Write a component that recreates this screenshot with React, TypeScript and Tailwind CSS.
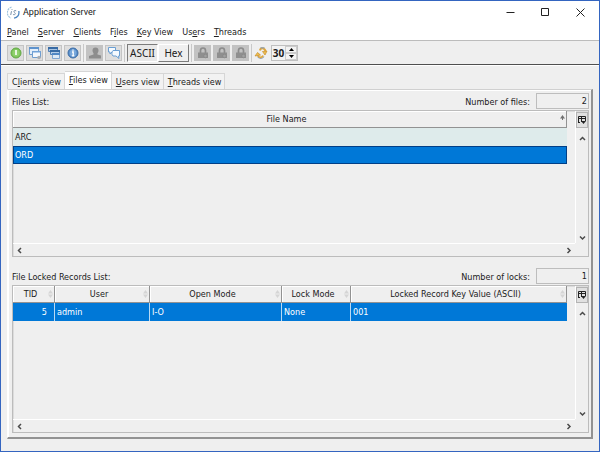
import { useState } from 'react';
import type { ReactNode } from 'react';
import { clsx } from 'clsx';

/** Label with one underlined access key. */
const Mnemonic = ({ text, at }: { text: string; at: number }) => (
  <span className="whitespace-pre">
    {text.slice(0, at)}
    <span className="underline underline-offset-1">{text[at]}</span>
    {text.slice(at + 1)}
  </span>
);

const menus = [
  { text: 'Panel', at: 0 },
  { text: 'Server', at: 0 },
  { text: 'Clients', at: 0 },
  { text: 'Files', at: 1 },
  { text: 'Key View', at: 0 },
  { text: 'Users', at: 2 },
  { text: 'Threads', at: 0 },
];

const tabs = [
  { text: 'Clients view', at: 1 },
  { text: 'Files view', at: 0 },
  { text: 'Users view', at: 0 },
  { text: 'Threads view', at: 0 },
];

const AppLogo = () => (
  <svg viewBox="0 0 13 13" className="size-[13px]" fill="none" aria-hidden="true">
    <path d="M4.500 1.200A5.700 5.700 0 0 0 4 12" stroke="#9fc3de" strokeWidth="1.200" strokeDasharray="2 .7" />
    <path d="M7 12.200C10.500 11.800 12.500 9 11.800 5" stroke="#4d86c0" strokeWidth="1.300" />
    <path d="M4.500 5.200 3.700 9M5 3.200v.8" stroke="#7c93ac" />
    <path d="M9.200 4.800C7.500 4 6.300 5 7.300 6.300 9 7.500 8.500 9.200 6 8.500" stroke="#7c93ac" />
  </svg>
);

const RoundIcon = ({ kind }: { kind: 'power' | 'info' }) => (
  <svg viewBox="0 0 14 14" className="size-[14px]" aria-hidden="true">
    <circle cx="7" cy="7" r="5" fill={kind === 'power' ? '#7cc45a' : '#5289c6'} stroke={kind === 'power' ? '#63a845' : '#3e6da6'} />
    <circle cx="7" cy="7" r="3.500" fill={kind === 'power' ? '#8fd06c' : '#79a8db'} />
    {kind === 'power' ? (
      <path d="M7 4v5" stroke="#fff" strokeWidth="1.600" />
    ) : (
      <path d="M7 3.500v1.300M6 6h1.200v3.500M5.800 9.800h2.600" stroke="#fff" strokeWidth="1.300" fill="none" />
    )}
  </svg>
);

const WindowsIcon = () => (
  <svg viewBox="0 0 14 14" className="size-[14px]" aria-hidden="true">
    <path d="M1.500 1.500h9v7h-9z" fill="#e3eefa" stroke="#6f9dcf" />
    <path d="M1 1h10v2H1z" fill="#5f93cd" />
    <path d="M4.500 5.500h8v6h-8z" fill="#f4f8fd" stroke="#6f9dcf" />
    <path d="M4 5h9v1.500H4z" fill="#72a3d8" />
    <circle cx="11" cy="11.500" r="1.800" fill="#a8adb3" />
  </svg>
);

const CascadeIcon = () => (
  <svg viewBox="0 0 14 14" className="size-[14px]" aria-hidden="true">
    <path d="M1.500 1.500h9v4h-9z" fill="#a9c5e3" stroke="#4f7fb5" />
    <path d="M1 1h10v2H1z" fill="#386ba5" />
    <path d="M3.500 4.500h9v4h-9z" fill="#b5cde8" stroke="#4f7fb5" />
    <path d="M3 4h10v2H3z" fill="#386ba5" />
    <path d="M5.500 7.500h7v5h-7z" fill="#dfeaf6" stroke="#7fa5d1" />
    <path d="M5 7h8v2H5z" fill="#5288c4" />
  </svg>
);

const UserIcon = () => (
  <svg viewBox="0 0 14 14" className="size-[14px]" fill="#8d8d8d" aria-hidden="true">
    <circle cx="7.500" cy="4.500" r="3" />
    <path d="M5.500 6h4v2.500l3.500 1v3H1V10l4.500-1.500z" />
  </svg>
);

const ChatIcon = () => (
  <svg viewBox="0 0 14 14" className="size-[14px]" fill="#f5faff" stroke="#6b9fd3" aria-hidden="true">
    <path d="M1.500 1.500h7v4.500H5L3 8V6H1.500z" />
    <path d="M6 4.500h6.500V10h-1l.500 2.500L9 10H6C4.500 8.500 4.500 6 6 4.500z" />
  </svg>
);

const LockIcon = () => (
  <svg viewBox="0 0 14 14" className="size-[14px]" aria-hidden="true">
    <path d="M4.500 7V4.500a2.500 2.500 0 0 1 5 0V7" fill="none" stroke="#8c8c8c" strokeWidth="1.700" />
    <path d="M2 6.500h10V12H2z" fill="#8f8f8f" />
    <circle cx="9.500" cy="10" r="1.800" fill="#a0a0a0" stroke="#858585" strokeWidth=".7" />
  </svg>
);

const RefreshIcon = () => (
  <svg viewBox="0 0 14 14" className="size-[14px]" fill="none" aria-hidden="true">
    <path d="M6 4.500C6.500 1.500 11 1.500 11.500 5.500" stroke="#e0a63a" strokeWidth="2" />
    <path d="M6.500 1.800h4M10 10.500c-1.500 2.500-5 2.500-6.500 0" stroke="#8b9eb4" strokeWidth="1.200" />
    <path d="M9 9.500C8 12 5 12 4 9.500" stroke="#e0a63a" strokeWidth="1.800" />
    <path d="M1 10 3.500 6.500 6.500 9zM8.500 5.500l4.500-.5-2 4z" fill="#efbf4e" stroke="#c78e2b" strokeWidth=".7" />
  </svg>
);

interface ToolButtonProps {
  label: string;
  disabled?: boolean;
  children: ReactNode;
}

const ToolButton = ({ label, disabled, children }: ToolButtonProps) => (
  <button
    type="button"
    aria-label={label}
    disabled={disabled}
    className="flex h-4 w-[17px] items-center justify-center border border-[#c4c4c4] bg-[#dedede] disabled:border-[#c2c2c2] disabled:bg-[#c2c2c2]"
  >
    {children}
  </button>
);

const Divider = () => <span className="h-[18px] w-px bg-[#c9c9c9]" />;

const Chevron = ({ d }: { d: string }) => (
  <svg viewBox="0 0 7 7" className="size-[7px]" fill="none" stroke="#4a4a4a" strokeWidth="1.500" aria-hidden="true">
    <path d={d} />
  </svg>
);

const SortMark = ({ sorted }: { sorted?: boolean }) => (
  <svg viewBox="0 0 5 8" className="h-2 w-[5px]" fill={sorted ? '#707070' : '#d5d5d5'} aria-hidden="true">
    <path d="M0 3.500 2.500 0 5 3.500z" />
    {sorted ? <path d="M2 3h1v2H2z" /> : <path d="M0 4.500 2.500 8 5 4.500z" />}
  </svg>
);

interface ListFrameProps {
  className: string;
  children: ReactNode;
}

/** Sunken list area with its column chooser and both scroll bars. */
const ListFrame = ({ className, children }: ListFrameProps) => (
  <div className={clsx('flex flex-col border border-[#bcbcbc] shadow-[inset_1px_1px_#dcdcdc]', className)}>
    <div className="flex flex-1 gap-2">
      <div className="min-w-0 flex-1">{children}</div>
      <div className="flex w-[13px] flex-col items-center border-l border-white pt-px">
        <button type="button" aria-label="Choose columns" className="flex h-4 w-3 items-center justify-center border border-[#b4b4b4] bg-[#e0e0e0]">
          <svg viewBox="0 0 8 8" className="size-2" fill="none" stroke="#222" aria-hidden="true">
            <path d="M.5 6V.5h7V5M.5 2.500h7M3.500 1v5M0 6.500h2" />
            <path d="M3 5h5L5.500 8z" fill="#222" stroke="none" />
          </svg>
        </button>
        <button type="button" aria-label="Scroll up" className="mt-1 flex size-3 items-center justify-center">
          <Chevron d="M1 5 3.500 2.500 6 5" />
        </button>
        <button type="button" aria-label="Scroll down" className="mt-auto flex size-3 items-center justify-center">
          <Chevron d="M1 2.500 3.500 5 6 2.500" />
        </button>
      </div>
    </div>
    <div className="mr-[13px] flex h-[13px] items-center justify-between border-t border-white pr-[3px] pl-[3px]">
      <button type="button" aria-label="Scroll left">
        <Chevron d="M5 1 2.500 3.500 5 6" />
      </button>
      <button type="button" aria-label="Scroll right">
        <Chevron d="M2.500 1 5 3.500 2.500 6" />
      </button>
    </div>
  </div>
);

const HeaderCell = ({ children, sorted }: { children: ReactNode; sorted?: boolean }) => (
  <th scope="col" className="h-[17px] border-r border-b border-[#929292] p-0 font-normal shadow-[inset_1px_1px_#ffffff]">
    <div className="flex items-center pr-px">
      <span className="flex-1 text-center whitespace-nowrap">{children}</span>
      <SortMark sorted={sorted} />
    </div>
  </th>
);

interface ListCaptionProps {
  title: string;
  countLabel: string;
  id: string;
  count: number;
}

const ListCaption = ({ title, countLabel, id, count }: ListCaptionProps) => (
  <div className="flex h-[17px] items-start">
    <h2 className="flex-1 pt-0.5">{title}</h2>
    <label htmlFor={id} className="pt-0.5 pr-1.5">
      {countLabel}
    </label>
    <input
      id={id}
      readOnly
      value={count}
      className="h-4 w-[53px] border border-[#bdbdbd] bg-[#efefef] pr-px text-right outline-none"
    />
  </div>
);

export default function App() {
  const [active, setActive] = useState(1);
  const [file, setFile] = useState('ORD');
  const [mode, setMode] = useState('ASCII');
  const [seconds, setSeconds] = useState(30);

  return (
    <main className="flex h-screen flex-col border border-[#3465c0] bg-[#efefef] font-['DejaVu_Sans_Condensed','DejaVu_Sans',sans-serif] text-[9px] leading-[14px] text-[#202020]">
      <header className="flex h-[22px] items-center bg-white pr-3.5 pl-1.5">
        <AppLogo />
        <h1 className="flex-1 pl-[3px] font-[Roboto,'Open_Sans',sans-serif] text-[9px]">Application Server</h1>
        <div className="flex items-center gap-[26px]">
          <button type="button" aria-label="Minimize">
            <svg viewBox="0 0 9 9" className="size-[9px]" stroke="#222" aria-hidden="true">
              <path d="M.5 4.500h8" />
            </svg>
          </button>
          <button type="button" aria-label="Maximize">
            <svg viewBox="0 0 9 9" className="size-[9px]" fill="none" stroke="#222" aria-hidden="true">
              <path d="M.5 .5h7v7h-7z" />
            </svg>
          </button>
          <button type="button" aria-label="Close">
            <svg viewBox="0 0 9 9" className="size-[9px]" stroke="#222" aria-hidden="true">
              <path d="m.5.500 8 8M8.500.500l-8 8" />
            </svg>
          </button>
        </div>
      </header>

      <nav className="flex h-[17px] items-center gap-[9px] bg-white pl-1.5">
        {menus.map((m) => (
          <button key={m.text} type="button">
            <Mnemonic {...m} />
          </button>
        ))}
      </nav>

      <div className="flex h-[25px] items-center border-t border-b border-t-[#bcbcbc] border-b-[#4f4f4f] pl-1.5">
        <div className="flex items-center gap-0.5">
          <ToolButton label="Power"><RoundIcon kind="power" /></ToolButton>
          <ToolButton label="Windows"><WindowsIcon /></ToolButton>
          <ToolButton label="Cascade"><CascadeIcon /></ToolButton>
          <ToolButton label="Information"><RoundIcon kind="info" /></ToolButton>
          <Divider />
          <ToolButton label="User" disabled><UserIcon /></ToolButton>
          <ToolButton label="Messages"><ChatIcon /></ToolButton>
          <Divider />
        </div>
        <div className="flex px-0.5 font-['Noto_Sans',sans-serif] text-[10px]">
          {['ASCII', 'Hex'].map((m) => (
            <button
              key={m}
              type="button"
              aria-pressed={mode === m}
              onClick={() => setMode(m)}
              className={clsx(
                'h-[18px] w-[31px] border',
                mode === m
                  ? 'border-t-[#7b7b7b] border-r-white border-b-white border-l-[#7b7b7b] bg-[#e8e8e8]'
                  : 'border-t-white border-r-[#7b7b7b] border-b-[#7b7b7b] border-l-white',
              )}
            >
              {m}
            </button>
          ))}
        </div>
        <div className="flex items-center gap-0.5">
          <Divider />
          <ToolButton label="Lock record" disabled><LockIcon /></ToolButton>
          <ToolButton label="Unlock record" disabled><LockIcon /></ToolButton>
          <ToolButton label="Lock file" disabled><LockIcon /></ToolButton>
          <Divider />
          <button type="button" aria-label="Refresh"><RefreshIcon /></button>
        </div>
        <div className="ml-[3px] flex h-4 border border-[#c0c0c0] bg-[#f3f3f3]">
          <input
            aria-label="Refresh interval"
            value={seconds}
            onChange={(e) => setSeconds(Number(e.target.value) || 0)}
            className="w-[13px] text-center font-['Noto_Sans',sans-serif] text-[10px] font-bold outline-none"
          />
          <div className="flex w-3 flex-col">
            <button type="button" aria-label="Increase" onClick={() => setSeconds(seconds + 1)} className="flex flex-1 items-center justify-center border border-[#cccccc]">
              <svg viewBox="0 0 5 3" className="h-[3px] w-[5px]"><path d="M0 3 2.500 0 5 3z" /></svg>
            </button>
            <button type="button" aria-label="Decrease" onClick={() => setSeconds(seconds - 1)} className="flex flex-1 items-center justify-center border border-[#cccccc]">
              <svg viewBox="0 0 5 3" className="h-[3px] w-[5px]"><path d="M0 0h5L2.500 3z" /></svg>
            </button>
          </div>
        </div>
      </div>

      <div className="flex flex-1 flex-col border-t border-white px-1.5 pt-[5px] pb-3">
        <div role="tablist" className="flex items-end">
          {tabs.map((t, i) => (
            <button
              key={t.text}
              type="button"
              role="tab"
              aria-selected={i === active}
              onClick={() => setActive(i)}
              className={clsx(
                'border-t border-r border-[#d6d6d6] pr-[3px] pl-1',
                i === active ? 'h-[18px] bg-white pb-px' : 'h-4 bg-[#f2f2f2]',
                i === 0 && 'border-l',
              )}
            >
              <Mnemonic {...t} />
            </button>
          ))}
        </div>

        <section className="flex flex-1 flex-col border-t border-r-2 border-b-2 border-l border-t-[#d0d0d0] border-r-[#929292] border-b-[#929292] border-l-white pt-[3px] pr-0.5 pb-1 pl-1 shadow-[inset_1px_1px_#ffffff]">
          <ListCaption title="Files List:" countLabel="Number of files:" id="file-count" count={2} />
          <ListFrame className="h-[147px]">
            <table className="w-full table-fixed border-separate border-spacing-0">
              <thead>
                <tr>
                  <HeaderCell sorted>File Name</HeaderCell>
                </tr>
              </thead>
              <tbody>
                {['ARC', 'ORD'].map((name) => (
                  <tr key={name} onClick={() => setFile(name)}>
                    <td
                      className={clsx(
                        'h-[18px] border px-px py-0',
                        name === file ? 'border-[#003f87] bg-[#0078d7] text-white' : 'border-[#deebeb] bg-[#deebeb]',
                      )}
                    >
                      {name}
                    </td>
                  </tr>
                ))}
              </tbody>
            </table>
          </ListFrame>

          <div className="h-[11px]" />
          <ListCaption title="File Locked Records List:" countLabel="Number of locks:" id="lock-count" count={1} />
          <ListFrame className="flex-1">
            <table className="w-full table-fixed border-separate border-spacing-0">
              <colgroup>
                <col className="w-[42px]" />
                <col className="w-[95px]" />
                <col className="w-[132px]" />
                <col className="w-[69px]" />
                <col />
              </colgroup>
              <thead>
                <tr>
                  <HeaderCell>TID</HeaderCell>
                  <HeaderCell>User</HeaderCell>
                  <HeaderCell>Open Mode</HeaderCell>
                  <HeaderCell>Lock Mode</HeaderCell>
                  <HeaderCell>Locked Record Key Value (ASCII)</HeaderCell>
                </tr>
              </thead>
              <tbody>
                <tr className="bg-[#0078d7] text-white">
                  <td className="h-[18px] border-r border-[#b9d9f3] py-0 pr-[7px] pl-0 text-right">5</td>
                  <td className="border-r border-[#b9d9f3] px-0.5 py-0">admin</td>
                  <td className="border-r border-[#b9d9f3] px-0.5 py-0">I-O</td>
                  <td className="border-r border-[#b9d9f3] px-0.5 py-0">None</td>
                  <td className="px-0.5 py-0">001</td>
                </tr>
              </tbody>
            </table>
          </ListFrame>
        </section>
      </div>
    </main>
  );
}
